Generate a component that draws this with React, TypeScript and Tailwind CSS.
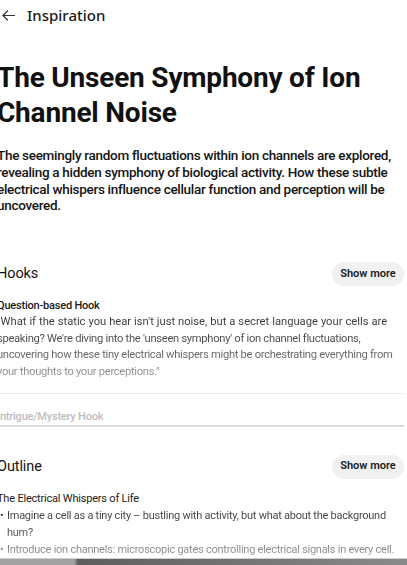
import React from "react";

function ShowMore() {
  return (
    <button className="h-[24px] w-[72px] rounded-full bg-[#f1f1f1] text-[11px] font-semibold text-[#1a1a1a] flex items-center justify-center">
      Show more
    </button>
  );
}

const quoteLines = [
  "\"What if the static you hear isn't just noise, but a secret language your cells are",
  "speaking? We're diving into the 'unseen symphony' of ion channel fluctuations,",
  "uncovering how these tiny electrical whispers might be orchestrating everything from",
  "your thoughts to your perceptions.\"",
];

export default function App() {
  return (
    <div className="bg-white h-[565px] overflow-hidden" style={{ fontFamily: "Roboto, 'Noto Sans', sans-serif" }}>
      <div className="-ml-[3px] mr-[3px]">
        <header className="h-[30px] flex items-center pl-[5px]">
          <svg width="13" height="11" viewBox="0 0 13 11" fill="none" stroke="#333" strokeWidth="1.2" strokeLinecap="round" strokeLinejoin="round">
            <path d="M1 5.5H12.5" />
            <path d="M5.5 1L1 5.5L5.5 10" />
          </svg>
          <span className="ml-[12px] text-[15px] font-medium text-[#1a1a1a]" style={{ fontFamily: "'Noto Sans', sans-serif" }}>
            Inspiration
          </span>
        </header>

        <h1 className="mt-[30px] text-[28px] leading-[35px] font-bold text-[#111] tracking-[-0.2px]">
          The Unseen Symphony of Ion Channel Noise
        </h1>

        <p className="mt-[17px] text-[13.5px] leading-[16.8px] font-medium tracking-[-0.3px] text-[#141414]">
          The seemingly random fluctuations within ion channels are explored, revealing a hidden symphony of biological activity. How these subtle electrical whispers influence cellular function and perception will be uncovered.
        </p>

        <section className="mt-[48px]">
          <div className="flex items-center justify-between">
            <h2 className="text-[14.5px] tracking-[-0.1px] text-[#141414]">Hooks</h2>
            <ShowMore />
          </div>
          <div className="mt-[11px] text-[11px] leading-[17px] font-medium tracking-[-0.2px] text-[#1a1a1a]">Question-based Hook</div>
          <div className="text-[11.2px] leading-[16.6px] tracking-[-0.3px] bg-gradient-to-b from-[#333] via-[#555] to-[#a5a5a5] bg-clip-text text-transparent">
            {quoteLines.map((l, i) => (
              <div key={i} className={i === 0 ? "whitespace-nowrap tracking-[0px] [word-spacing:0.2px]" : "whitespace-nowrap"}>{l}</div>
            ))}
          </div>
          <div className="mt-[12px] h-px bg-[#ececec]" />
          <div className="pt-[14px] text-[11px] leading-[17px] font-medium tracking-[-0.2px] text-[#bdbdbd] border-b-2 border-[#dcdcdc]">
            Intrigue/Mystery Hook
          </div>
        </section>

        <section className="mt-[28px]">
          <div className="flex items-center justify-between">
            <h2 className="text-[14.5px] tracking-[-0.1px] text-[#141414]">Outline</h2>
            <ShowMore />
          </div>
          <div className="mt-[11px] text-[11px] leading-[17px] tracking-[-0.2px] text-[#222]">The Electrical Whispers of Life</div>
          <ul className="text-[11px] leading-[17px] tracking-[-0.25px] bg-gradient-to-b from-[#3a3a3a] via-[#555] to-[#a5a5a5] bg-clip-text text-transparent">
            <li className="flex">
              <span className="w-[10px] shrink-0 pl-[3px]">•</span>
              <span>Imagine a cell as a tiny city – bustling with activity, but what about the background hum?</span>
            </li>
            <li className="flex">
              <span className="w-[10px] shrink-0 pl-[3px]">•</span>
              <span>Introduce ion channels: microscopic gates controlling electrical signals in every cell.</span>
            </li>
          </ul>
        </section>
      </div>
      <div className="h-[20px] border-t border-[#cfcfcf] bg-[linear-gradient(to_right,#a2a2a2_0px,#a2a2a2_74px,#5e5e5e_78px,#6e6e6e_200px,#8a8a8a_100%)]" />
    </div>
  );
}
